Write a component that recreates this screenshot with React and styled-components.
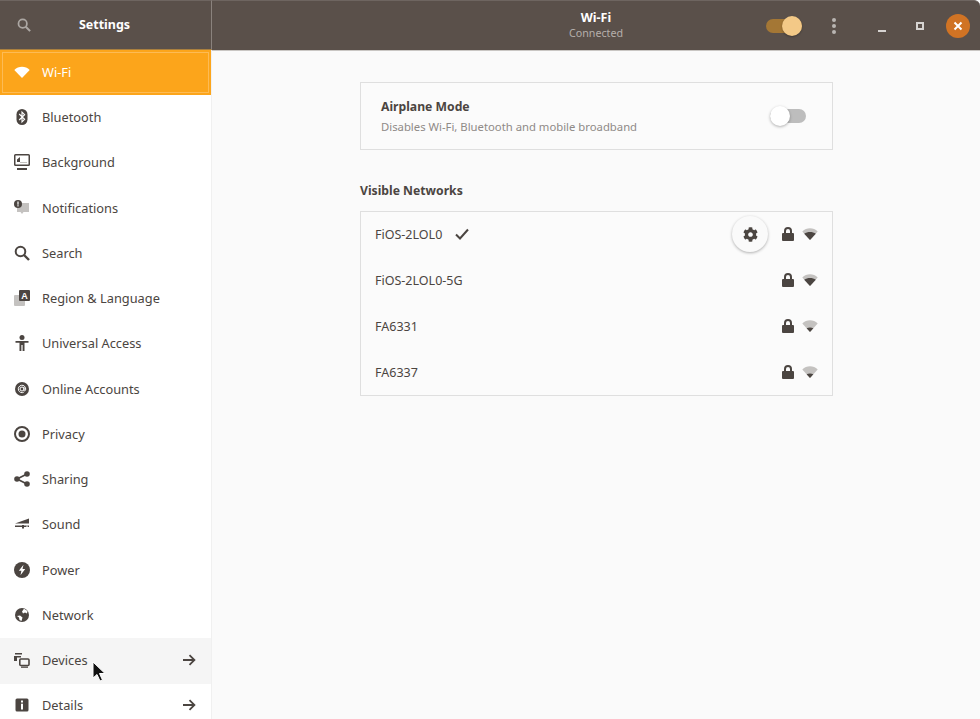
import React from "react";
import styled, { createGlobalStyle } from "styled-components";
import { FaCog } from "react-icons/fa";

const DARK = "#4b4541";
const GREY = "#c4c2c0";

const GlobalStyle = createGlobalStyle`
  html, body {
    margin: 0;
    height: 100%;
    background: #fafafa;
  }
  #root {
    height: 100%;
  }
`;

const Window = styled.div`
  display: grid;
  grid-template-columns: 212px 1fr;
  grid-template-rows: 50px 1fr;
  width: 980px;
  height: 719px;
  overflow: hidden;
  background: #fafafa;
  color: ${DARK};
  font-family: "Noto Sans", "Open Sans", sans-serif;
  font-size: 12.8px;
`;

const HeaderBar = styled.header`
  display: flex;
  align-items: center;
  background: #5a504a;
  border-top: 1px solid #6e6560;
  border-bottom: 1px solid #c9c6c3;
  box-sizing: border-box;
  height: 51px;
  color: #fff;
  position: relative;
`;

const SideHeader = styled(HeaderBar)`
  border-right: 1px solid #8a827d;
  padding-left: 17px;
  height: 50px;
  border-bottom-color: #a97f3f;
`;

const MainHeader = styled(HeaderBar)`
  border-top-right-radius: 6px;
`;

const HeadTitle = styled.div`
  font-weight: 700;
  font-size: 12.5px;
  line-height: 17px;
  text-align: center;
`;

const SideTitle = styled(HeadTitle)`
  flex: 1;
  padding-right: 33px;
  margin-top: -1px;
`;

const TitleBlock = styled.div`
  display: flex;
  flex-direction: column;
  align-items: center;
  margin-left: 335px;
  width: 98px;
  margin-top: -3px;
`;

const SubTitle = styled.div`
  font-size: 10.7px;
  line-height: 14px;
  color: #b5afab;
`;

const HeaderTools = styled.div`
  display: flex;
  align-items: center;
  margin-left: 121px;
`;

const HeadSwitch = styled.div`
  width: 36px;
  height: 14px;
  border-radius: 7px;
  background: #a47735;
  position: relative;
`;

const HeadKnob = styled.div`
  position: absolute;
  right: 0;
  top: -3px;
  width: 20px;
  height: 20px;
  border-radius: 50%;
  background: #f3c987;
  box-shadow: 0 1px 2px rgba(0, 0, 0, 0.3);
`;

const MenuDots = styled.svg`
  margin-left: 29px;
  width: 6px;
  height: 18px;
  display: block;
`;

const Minimize = styled.div`
  width: 8px;
  height: 2px;
  margin: 10px 0 0 41px;
  background: #d6d3d1;
`;

const Maximize = styled.div`
  width: 8px;
  height: 8px;
  margin-left: 30px;
  box-sizing: border-box;
  border: 2px solid #d6d3d1;
`;

const CloseButton = styled.div`
  width: 24px;
  height: 24px;
  border-radius: 50%;
  margin-left: 22px;
  background: #d07324;
  display: flex;
  align-items: center;
  justify-content: center;
`;

const Sidebar = styled.nav`
  background: #fff;
  border-right: 1px solid #f0f0f0;
  overflow: hidden;
  min-height: 0;
`;

const Row = styled.div`
  display: flex;
  align-items: center;
  height: 45.25px;
  box-sizing: border-box;
  padding: 0 14px 1.5px 14px;
  gap: 12px;
  background: ${(p) => (p.$active ? "#fca51b" : p.$hover ? "#f5f5f5" : "transparent")};
  color: ${(p) => (p.$active ? "#fff" : DARK)};
  position: relative;
`;

const FocusRing = styled.div`
  position: absolute;
  inset: 2px;
  border: 1px solid #fdbb55;
  pointer-events: none;
`;

const RowLabel = styled.span`
  flex: 1;
  white-space: nowrap;
`;

const Icon = styled.svg`
  width: 16px;
  height: 16px;
  display: block;
  flex: none;
`;

const HeaderSearch = styled(Icon)`
  width: 14px;
  height: 14px;
`;

const Cursor = styled.svg`
  position: absolute;
  left: 92px;
  top: 23px;
  width: 14px;
  height: 22px;
`;

const Main = styled.main`
  display: flex;
  flex-direction: column;
  align-items: center;
  padding-top: 32px;
  padding-left: 1px;
  min-height: 0;
`;

const Column = styled.div`
  width: 473px;
`;

const Card = styled.section`
  border: 1px solid #dfdfdf;
  box-sizing: border-box;
  background: #fbfbfb;
`;

const AirplaneCard = styled(Card)`
  display: flex;
  align-items: center;
  justify-content: space-between;
  height: 68px;
  padding: 0 26px 0 20px;
`;

const AirplaneText = styled.div`
  margin-top: -1px;
`;

const CardTitle = styled.div`
  font-weight: 700;
  font-size: 12.2px;
  line-height: 18px;
`;

const CardHint = styled.div`
  font-size: 11.3px;
  line-height: 15px;
  margin-top: 3px;
  color: #8f8a87;
`;

const Toggle = styled.div`
  width: 36px;
  height: 14px;
  border-radius: 7px;
  background: #bdbdbd;
  position: relative;
`;

const ToggleKnob = styled.div`
  position: absolute;
  left: 0;
  top: -3px;
  width: 20px;
  height: 20px;
  border-radius: 50%;
  background: #fff;
  box-shadow: 0 1px 3px rgba(0, 0, 0, 0.3);
`;

const SectionTitle = styled.h2`
  font-size: 12.2px;
  font-weight: 700;
  line-height: 18px;
  margin: 32px 0 11px;
`;

const NetList = styled.div`
  margin-top: -1px;
`;

const NetRow = styled.div`
  display: flex;
  align-items: center;
  height: 46px;
  padding: 0 14px;
  font-size: 12.5px;
`;

const NetName = styled.span`
  white-space: nowrap;
`;

const Check = styled.svg`
  width: 16px;
  height: 16px;
  margin-left: 12px;
`;

const Spacer = styled.div`
  flex: 1;
`;

const GearButton = styled.div`
  width: 36px;
  height: 36px;
  border-radius: 50%;
  margin-right: 12px;
  background: #fafafa;
  box-shadow: 0 1px 3px rgba(0, 0, 0, 0.3);
  display: flex;
  align-items: center;
  justify-content: center;
  font-size: 15px;
  color: ${DARK};
`;

const Lock = styled(Icon)`
  margin-right: 6px;
`;

const ArrowRight = ({ color = DARK }) => (
  <Icon viewBox="0 0 16 16" fill="none" stroke={color} strokeWidth="1.8">
    <path d="M2 8h11M8.5 3.2 13.4 8l-4.9 4.8" />
  </Icon>
);

const WifiFull = () => (
  <Icon viewBox="0 0 16 16">
    <path fill="#fff" d="M8 14 .3 6C4.5 1.8 11.5 1.800 15.7 6Z" />
  </Icon>
);

const WifiLevel = ({ weak }) => (
  <Icon viewBox="0 0 16 16">
    <path fill={GREY} d="M8 14 .3 5.6C4.5 1.200 11.5 1.200 15.7 5.6Z" />
    {weak ? (
      <path fill={DARK} d="M8 14 4.6 10.3C6.6 9.2 9.4 9.2 11.4 10.3Z" />
    ) : (
      <path fill={DARK} d="M8 14 2.2 7.8C5.5 5.3 10.5 5.3 13.8 7.8Z" />
    )}
  </Icon>
);

const icons = {
  wifi: <WifiFull />,
  bluetooth: (
    <Icon viewBox="0 0 16 16">
      <rect x="2.5" y="0" width="11" height="16" rx="5.5" fill={DARK} />
      <path fill="none" stroke="#fff" strokeWidth="1.1" d="M5.2 5 10.6 10.3 8 13V3l2.6 2.7L5.2 11" />
    </Icon>
  ),
  background: (
    <Icon viewBox="0 0 16 16">
      <path fill={DARK} d="M1.5 0h13A1.5 1.5 0 0 1 16 1.5v9a1.5 1.5 0 0 1-1.5 1.5h-13A1.5 1.5 0 0 1 0 10.5v-9A1.5 1.5 0 0 1 1.5 0Z" />
      <rect x="1.5" y="1.5" width="13" height="9" fill="#fff" />
      <path fill={DARK} d="M3 8V5.5L6 3v5ZM3 14h10v2H3Z" />
      <rect x="6" y="8" width="7" height="1" fill={GREY} />
    </Icon>
  ),
  notifications: (
    <Icon viewBox="0 0 16 16">
      <path fill={GREY} d="M3 3h12v9H9.5L8 14l-1.5-2H3Z" />
      <circle cx="4" cy="4" r="4" fill={DARK} />
      <rect x="3.4" y="1.5" width="1.2" height="3.2" fill="#fff" />
      <rect x="3.4" y="5.2" width="1.2" height="1.2" fill="#fff" />
    </Icon>
  ),
  search: (
    <Icon viewBox="0 0 16 16" fill="none" stroke={DARK} strokeWidth="2">
      <circle cx="6.5" cy="6.5" r="4.8" />
      <path d="m10 10 5 5" strokeWidth="2.4" />
    </Icon>
  ),
  region: (
    <Icon viewBox="0 0 16 16">
      <rect x="0" y="5" width="11" height="11" rx="1" fill={GREY} />
      <rect x="5" y="0" width="11" height="11" rx="1" fill={DARK} />
      <text x="10.5" y="9" fontSize="9" fontWeight="700" textAnchor="middle" fill="#fff" fontFamily="Liberation Sans, sans-serif">A</text>
    </Icon>
  ),
  access: (
    <Icon viewBox="0 0 16 16">
      <circle cx="8" cy="2.5" r="2.5" fill={DARK} />
      <path fill={DARK} d="M1.5 6h13v1.8H10.500V16H8.600v-6H7.400v6H5.500V7.800H1.500Z" />
    </Icon>
  ),
  online: (
    <Icon viewBox="0 0 16 16">
      <circle cx="8" cy="8" r="7" fill={DARK} />
      <circle cx="8" cy="8" r="2" fill="none" stroke="#fff" strokeWidth="1" />
      <path fill="none" stroke="#fff" strokeWidth="1" d="M10 6v3c0 1.4 1.7 1.2 1.7-1A3.7 3.7 0 1 0 9.8 11.2" />
    </Icon>
  ),
  privacy: (
    <Icon viewBox="0 0 16 16">
      <circle cx="8" cy="8" r="7" fill="none" stroke={DARK} strokeWidth="2" />
      <circle cx="8" cy="8" r="3.5" fill={DARK} />
    </Icon>
  ),
  sharing: (
    <Icon viewBox="0 0 16 16">
      <path stroke={DARK} strokeWidth="1.8" d="M3 8l10-5M3 8l10 5" />
      <circle cx="3" cy="8" r="2.8" fill={DARK} />
      <circle cx="13" cy="3" r="2.8" fill={DARK} />
      <circle cx="13" cy="13" r="2.8" fill={DARK} />
    </Icon>
  ),
  sound: (
    <Icon viewBox="0 0 16 16">
      <path fill={DARK} d="M1 7.5 15 2.5v5Z" />
      <path fill={DARK} d="M1 9.5h14V11H1Z" />
      <rect x="8" y="9" width="2" height="3.5" fill={DARK} />
      <rect x="12.5" y="9.5" width="1" height="1.5" fill="#fff" />
    </Icon>
  ),
  power: (
    <Icon viewBox="0 0 16 16">
      <circle cx="8" cy="8" r="8" fill={DARK} />
      <path fill="#fff" d="M9.5 2.8 4.8 8.8h2.6L6.5 13.2 11.2 7H8.5Z" />
    </Icon>
  ),
  network: (
    <Icon viewBox="0 0 16 16">
      <circle cx="8" cy="8" r="7" fill={DARK} />
      <path fill="#fff" d="M10 1.8 13.5 4 13 6.5 11 5.5 9 6.5 8 4.5ZM3 9 6 8.5 8.5 10.5 7.5 14 5.5 13 5 10.5Z" />
    </Icon>
  ),
  devices: (
    <Icon viewBox="0 0 16 16">
      <rect x="1" y="1" width="7" height="1.5" fill={DARK} />
      <path fill={DARK} d="M0 4h7v1.5H3V9H0Z" />
      <rect x="5.8" y="7" width="9.2" height="6.5" rx="1" fill="none" stroke={DARK} strokeWidth="1.6" />
      <rect x="7" y="14.5" width="7" height="1.3" fill={DARK} />
    </Icon>
  ),
  details: (
    <Icon viewBox="0 0 16 16">
      <rect x="1.5" y="1.5" width="13" height="13" rx="1.5" fill={DARK} />
      <rect x="7" y="3.5" width="2" height="2" fill="#fff" />
      <rect x="7" y="6.7" width="2" height="5.8" fill="#fff" />
    </Icon>
  ),
};

const navItems = [
  { key: "wifi", label: "Wi-Fi", active: true },
  { key: "bluetooth", label: "Bluetooth" },
  { key: "background", label: "Background" },
  { key: "notifications", label: "Notifications" },
  { key: "search", label: "Search" },
  { key: "region", label: "Region & Language" },
  { key: "access", label: "Universal Access" },
  { key: "online", label: "Online Accounts" },
  { key: "privacy", label: "Privacy" },
  { key: "sharing", label: "Sharing" },
  { key: "sound", label: "Sound" },
  { key: "power", label: "Power" },
  { key: "network", label: "Network" },
  { key: "devices", label: "Devices", arrow: true, hover: true },
  { key: "details", label: "Details", arrow: true },
];

const networks = [
  { name: "FiOS-2LOL0", connected: true },
  { name: "FiOS-2LOL0-5G" },
  { name: "FA6331", weak: true },
  { name: "FA6337", weak: true },
];

export default function App() {
  return (
    <>
      <GlobalStyle />
      <Window>
        <SideHeader>
          <HeaderSearch viewBox="0 0 16 16" fill="none" stroke="#aca7a3" strokeWidth="2">
            <circle cx="6.5" cy="6.5" r="4.8" />
            <path d="m10 10 5 5" strokeWidth="2.4" />
          </HeaderSearch>
          <SideTitle>Settings</SideTitle>
        </SideHeader>
        <MainHeader>
          <TitleBlock>
            <HeadTitle>Wi-Fi</HeadTitle>
            <SubTitle>Connected</SubTitle>
          </TitleBlock>
          <HeaderTools>
            <HeadSwitch>
              <HeadKnob />
            </HeadSwitch>
            <MenuDots viewBox="0 0 6 18">
              <circle cx="3" cy="3" r="2" fill="#b9b5b2" />
              <circle cx="3" cy="9" r="2" fill="#b9b5b2" />
              <circle cx="3" cy="15" r="2" fill="#b9b5b2" />
            </MenuDots>
            <Minimize />
            <Maximize />
            <CloseButton>
              <svg width="10" height="10" viewBox="0 0 10 10">
                <path d="M1.5 1.5l7 7M8.5 1.5l-7 7" stroke="#fff" strokeWidth="2" />
              </svg>
            </CloseButton>
          </HeaderTools>
        </MainHeader>
        <Sidebar>
          {navItems.map((item) => (
            <Row key={item.key} $active={item.active} $hover={item.hover}>
              {item.active && <FocusRing />}
              {icons[item.key]}
              <RowLabel>{item.label}</RowLabel>
              {item.arrow && <ArrowRight />}
              {item.hover && (
                <Cursor viewBox="0 0 14 22">
                  <path d="M1 1v16l4-3.5 3 6.5 2.5-1-3-6.5H13Z" fill="#111" stroke="#fff" strokeWidth="1" />
                </Cursor>
              )}
            </Row>
          ))}
        </Sidebar>
        <Main>
          <Column>
            <AirplaneCard>
              <AirplaneText>
                <CardTitle>Airplane Mode</CardTitle>
                <CardHint>Disables Wi-Fi, Bluetooth and mobile broadband</CardHint>
              </AirplaneText>
              <Toggle>
                <ToggleKnob />
              </Toggle>
            </AirplaneCard>
            <SectionTitle>Visible Networks</SectionTitle>
            <Card>
              <NetList>
                {networks.map((net) => (
                  <NetRow key={net.name}>
                    <NetName>{net.name}</NetName>
                    {net.connected && (
                      <Check viewBox="0 0 16 16" fill="none" stroke={DARK} strokeWidth="2">
                        <path d="M2 8.5 6 12.5 14 3.5" />
                      </Check>
                    )}
                    <Spacer />
                    {net.connected && (
                      <GearButton>
                        <FaCog />
                      </GearButton>
                    )}
                    <Lock viewBox="0 0 16 16">
                      <path fill="none" stroke={DARK} strokeWidth="2" d="M5 8V5a3 3 0 0 1 6 0v3" />
                      <rect x="2" y="7" width="12" height="8" rx="1" fill={DARK} />
                    </Lock>
                    <WifiLevel weak={net.weak} />
                  </NetRow>
                ))}
              </NetList>
            </Card>
          </Column>
        </Main>
      </Window>
    </>
  );
}
